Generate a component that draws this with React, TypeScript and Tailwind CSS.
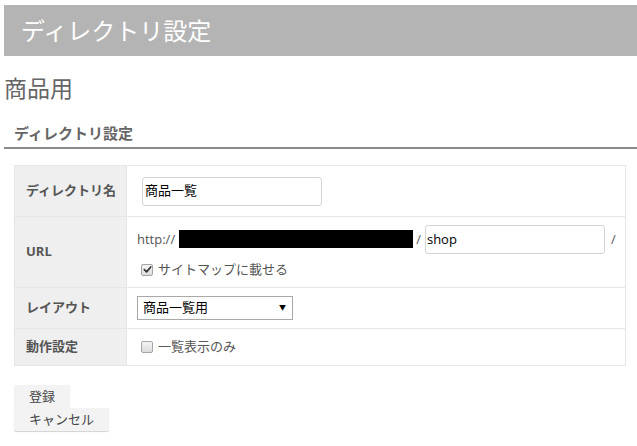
import React from "react";

const jp = "font-['Open_Sans','Noto_Sans_CJK_JP',sans-serif]";

function Check({ checked }: { checked?: boolean }) {
  return (
    <span className="relative inline-flex h-[12px] w-[12px] items-center justify-center rounded-[2px] border border-[#a5a5a5] bg-gradient-to-b from-[#f4f4f4] to-[#dcdcdc]">
      {checked && (
        <svg viewBox="0 0 10 10" className="h-[9px] w-[9px]">
          <path d="M1.5 5.2 L4 7.6 L8.6 2.2" fill="none" stroke="#333" strokeWidth="1.9" strokeLinecap="round" strokeLinejoin="round" />
        </svg>
      )}
    </span>
  );
}

export default function App() {
  return (
    <div className={`${jp} h-[446px] w-[637px] overflow-hidden bg-white text-[13px] text-[#555]`}>
      <div className="ml-[4px] mt-[5px] flex h-[51px] items-center bg-[#b4b4b4] pl-[17px] text-[24px] text-white">
        ディレクトリ設定
      </div>

      <h2 className="ml-[4px] mt-[17px] text-[23px] leading-[30px] text-[#666]">商品用</h2>

      <div className="ml-[4px] mt-[20px] border-b-2 border-[#8a8a8a] pb-[4px] pl-[10px] text-[15px] font-bold leading-[20px] text-[#666]">
        ディレクトリ設定
      </div>

      <table className="ml-[14px] mt-[16px] w-[612px] border-collapse">
        <tbody>
          <tr className="h-[51px]">
            <th className="w-[112px] border border-[#e6e6e6] bg-[#efefef] pl-[11px] text-left text-[13px] font-bold">ディレクトリ名</th>
            <td className="border border-[#e6e6e6] pl-[10px]">
              <div className="ml-[5px] flex h-[29px] w-[180px] items-center rounded-[3px] border border-[#d4d4d4] pl-[2px] text-[13px] text-black">
                商品一覧
              </div>
            </td>
          </tr>
          <tr className="h-[71px]">
            <th className="border border-[#e6e6e6] bg-[#efefef] pl-[11px] text-left text-[13px] font-bold">URL</th>
            <td className="border border-[#e6e6e6] pl-[10px]">
              <div className="flex items-center">
                <span className="text-[13px]">http://</span>
                <span className="ml-[4px] h-[18px] w-[234px] bg-black" />
                <span className="ml-[3px] text-[13px]">/</span>
                <div className="ml-[4px] flex h-[29px] w-[180px] items-center rounded-[3px] border border-[#d4d4d4] pl-[1px] text-[13px] text-black">
                  shop
                </div>
                <span className="ml-[6px] text-[13px]">/</span>
              </div>
              <label className="ml-[4px] mt-[6px] flex items-center gap-[5px] text-[13px]">
                <Check checked />
                サイトマップに載せる
              </label>
            </td>
          </tr>
          <tr className="h-[41px]">
            <th className="border border-[#e6e6e6] bg-[#efefef] pl-[11px] text-left text-[13px] font-bold">レイアウト</th>
            <td className="border border-[#e6e6e6] pl-[10px]">
              <div className="flex h-[24px] w-[156px] items-center justify-between border border-[#a9a9a9] pl-[5px] pr-[6px] text-[13px] text-black">
                <span>商品一覧用</span>
                <span className="text-[7px]">▼</span>
              </div>
            </td>
          </tr>
          <tr className="h-[37px]">
            <th className="border border-[#e6e6e6] bg-[#efefef] pl-[11px] text-left text-[13px] font-bold">動作設定</th>
            <td className="border border-[#e6e6e6] pl-[10px]">
              <label className="ml-[4px] flex items-center gap-[5px] text-[13px]">
                <Check />
                一覧表示のみ
              </label>
            </td>
          </tr>
        </tbody>
      </table>

      <div className="ml-[14px] mt-[19px] flex flex-col items-start">
        <button className="h-[23px] rounded-[2px] bg-[#f3f3f3] px-[15px] text-[13px] text-[#444] shadow-[0_1px_1px_rgba(0,0,0,0.12)]">
          登録
        </button>
        <button className="h-[23px] rounded-[2px] bg-[#f3f3f3] px-[15px] text-[13px] text-[#444] shadow-[0_1px_1px_rgba(0,0,0,0.18)]">
          キャンセル
        </button>
      </div>
    </div>
  );
}
